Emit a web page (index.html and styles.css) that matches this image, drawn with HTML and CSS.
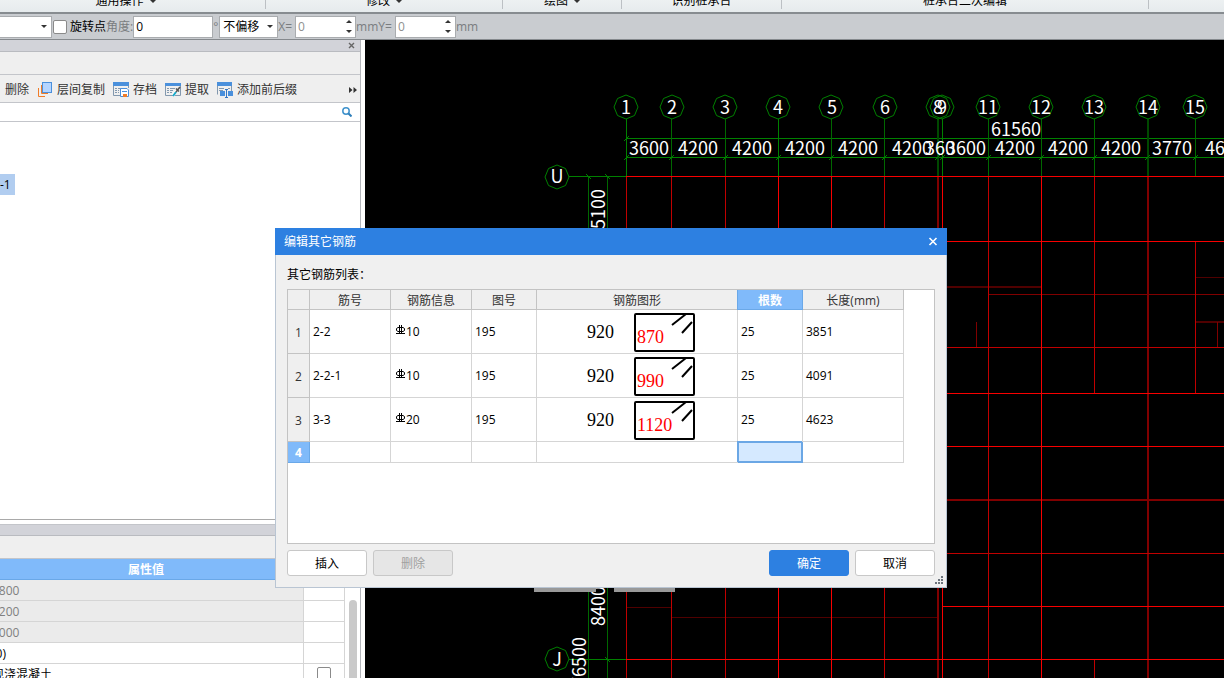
FILE: index.html
```html
<!DOCTYPE html>
<html lang="zh-CN">
    <head>
        <meta charset="utf-8">
        <link rel="stylesheet" href="styles.css">
        <title>编辑其它钢筋</title>
    </head>
    <body>
        <div class="ribbon">
            <div class="group first">通用操作<i class="down"></i></div>
            <div class="group modify">修改<i class="down"></i></div>
            <div class="group draw">绘图<i class="down"></i></div>
            <div class="group detect">识别桩承台</div>
            <div class="group edit">桩承台二次编辑</div>
        </div>

        <div class="options">
            <span class="combo layer"><select aria-label="图层"><option></option></select><i class="down"></i></span>
            <input type="checkbox" id="rotate" class="check">
            <label for="rotate">旋转点</label>
            <label for="angle" class="dim">角度:</label>
            <input type="text" id="angle" class="angle" value="0">
            <span class="dim">°</span>
            <span class="combo offset"><select aria-label="偏移"><option>不偏移</option></select><i class="down"></i></span>
            <label for="offx" class="dim">X=</label>
            <span class="spin"><input type="text" id="offx" value="0"><span class="arrows"><button aria-label="X加"><i class="up"></i></button><button aria-label="X减"><i class="down"></i></button></span></span>
            <label for="offy" class="dim">mmY=</label>
            <span class="spin"><input type="text" id="offy" value="0"><span class="arrows"><button aria-label="Y加"><i class="up"></i></button><button aria-label="Y减"><i class="down"></i></button></span></span>
            <span class="dim">mm</span>
        </div>

        <div class="main">
            <div class="side">
                <div class="caption">
                    <button aria-label="关闭面板"><svg width="7" height="7" viewBox="0 0 7 7"><path d="M1 1L6 6M6 1L1 6" stroke="#666" stroke-width="1.4"/></svg></button>
                </div>
                <div class="tabs"></div>
                <div class="tools">
                    <button>删除</button>
                    <button>
                        <svg width="16" height="16" viewBox="0 0 16 16" fill="none">
                            <path d="M1.500 6V14.500H8M4.500 3V11.500H11" stroke="#f07c28"/>
                            <rect x="5.500" y=".5" width="9" height="10" fill="#b5d5ff" stroke="#4a90dc"/>
                        </svg>
                        层间复制
                    </button>
                    <button>
                        <svg width="16" height="16" viewBox="0 0 16 16" fill="none">
                            <path d="M.5 1V13.500H7M15.500 1V6" stroke="#8298ae"/>
                            <rect width="16" height="4" fill="#4a90dc"/>
                            <path d="M2 6.500H4M5 6.500H9M10 6.500H13M2 8.500H4M5 8.500H6M2 10.500H4M5 10.500H6" stroke="#8298ae"/>
                            <path d="M7.500 6.500H14L15.500 8V14.500H7.500Z" fill="#fff" stroke="#4a90dc"/>
                            <path d="M9 9.500H14" stroke="#4a90dc"/>
                            <rect x="10" y="12" width="4" height="3" fill="#f07c28"/>
                        </svg>
                        存档
                    </button>
                    <button>
                        <svg width="16" height="16" viewBox="0 0 16 16" fill="none">
                            <path d="M.5 2V13.500H15.500V2" stroke="#8298ae"/>
                            <rect y="1" width="16" height="3" fill="#4a90dc"/>
                            <path d="M2 6.500H4M5 6.500H10M2 8.500H4M5 8.500H8M2 10.500H4M5 10.500H7" stroke="#8298ae"/>
                            <path d="M8 13.500L12.500 7.500" stroke="#fff" stroke-width="3"/>
                            <path d="M8 14L11 10" stroke="#18a9c8" stroke-width="2"/>
                            <path d="M11 6.500L14 9.500M11 10L15 5" stroke="#555" stroke-width="1.600"/>
                        </svg>
                        提取
                    </button>
                    <button>
                        <svg width="16" height="16" viewBox="0 0 16 16" fill="none">
                            <path d="M.5 0V12.500M14.500 0V9" stroke="#8298ae"/>
                            <rect width="15" height="4" fill="#4a90dc"/>
                            <path d="M2 6.500H7M2 8.500H6M11 6.500H13" stroke="#8298ae"/>
                            <rect x="3" y="9" width="5" height="5" fill="#4a90dc"/>
                            <rect x="11" y="9" width="5" height="5" fill="#4a90dc"/>
                            <path d="M8 7.500H11M8 15.500H11M9.500 7V16" stroke="#3577c4"/>
                        </svg>
                        添加前后缀
                    </button>
                    <button class="more" aria-label="更多"><svg width="8" height="6" viewBox="0 0 8 6"><path d="M0 0L3.500 3L0 6ZM4.500 0L8 3L4.500 6Z" fill="#333"/></svg></button>
                </div>
                <div class="search">
                    <input type="text" aria-label="搜索">
                    <button aria-label="查找"><svg width="10" height="10" viewBox="0 0 10 10" fill="none"><circle cx="4" cy="4" r="3.200" stroke="#3f92cc" stroke-width="1.500"/><path d="M6.500 6.500L9.500 9.500" stroke="#2f7fba" stroke-width="2"/></svg></button>
                </div>
                <div class="tree">
                    <span class="node">-1</span>
                </div>
                <div class="caption lower"></div>
                <div class="tabs lower"></div>
                <div class="props">
                    <table>
                        <colgroup><col class="value"><col class="extra"></colgroup>
                        <tr><th>属性值</th><th></th></tr>
                        <tr class="locked"><td>1800</td><td></td></tr>
                        <tr class="locked"><td>1200</td><td></td></tr>
                        <tr class="locked"><td>1000</td><td></td></tr>
                        <tr><td>(0)</td><td></td></tr>
                        <tr><td>现浇混凝土</td><td class="tick"><input type="checkbox" class="check" aria-label="附加"></td></tr>
                    </table>
                    <div class="scroll"><div class="thumb"></div></div>
                </div>
            </div>

            <div class="canvas">
                <svg class="drawing" width="100%" height="100%">
                    <defs>
                        <polygon id="axis" points="12,0 8.500,8.500 0,12 -8.500,8.500 -12,0 -8.500,-8.500 0,-12 8.500,-8.500"/>
                    </defs>
                    <g transform="translate(-365 -40)">
                        <!-- dimension lines -->
                        <g class="green">
                            <path d="M626 138.500H2400M626 157.500H2400M569 176.500H626M569 659.500H626"/>
                            <path d="M626.500 119V176M778.500 119V176M942.500 119V176"/>
                            <path class="deep" d="M671.500 119V176M725.500 119V176M831.500 119V176M884.500 119V176M988.500 119V176M1041.500 119V176M1094.500 119V176M1195.500 119V176M588.500 176V2000M607.500 176V2000"/>
                            <path class="wide" d="M938 119V176M1148 119V176"/>
                            <path d="M624 141L629 136M624 160L629 155M669 160L674 155M723 160L728 155M776 160L781 155M829 160L834 155M882 160L887 155M935 160L940 155M940 160L945 155M986 160L991 155M1039 160L1044 155M1092 160L1097 155M1145 160L1150 155M1193 160L1198 155M586 174L591 179M605 174L610 179M605 657L610 662"/>
                            <use href="#axis" x="626" y="107"/>
                            <use href="#axis" x="672" y="107"/>
                            <use href="#axis" x="725" y="107"/>
                            <use href="#axis" x="778" y="107"/>
                            <use href="#axis" x="831" y="107"/>
                            <use href="#axis" x="885" y="107"/>
                            <use href="#axis" x="938" y="107"/>
                            <use href="#axis" x="942" y="107"/>
                            <use href="#axis" x="988" y="107"/>
                            <use href="#axis" x="1041" y="107"/>
                            <use href="#axis" x="1094" y="107"/>
                            <use href="#axis" x="1148" y="107"/>
                            <use href="#axis" x="1195" y="107"/>
                            <use href="#axis" x="557" y="177"/>
                            <use href="#axis" x="557" y="659"/>
                        </g>

                        <!-- grid -->
                        <g class="red">
                            <path class="faint" d="M626 607.500H671M671 617.500H938M1195 277.500H2400"/>
                            <path class="faint wide" d="M942 287H1041M1195 322H2400"/>
                            <path class="dark" d="M988 294.500H2400M976.500 322V347M1217.500 322V347"/>
                            <path class="dark wide" d="M938 176V2000M1148 176V2000M942 500H2400"/>
                            <path class="mid" d="M626.500 176V2000M671.500 176V2000M725.500 176V2000M884.500 176V2000M988.500 176V2000M1094.500 176V393M1094.500 659V2000M1195.500 241V393M942 347.500H2400M942 553.500H2400"/>
                            <path d="M778.500 176V2000M831.500 176V2000M942.500 176V2000M1041.500 176V2000M626 176.500H2400M942 241.500H2400M942 393.500H2400M942 446.500H2400M942 606.500H2400M626 659.500H2400"/>
                        </g>

                        <g class="note">
                            <text x="626" y="114">1</text>
                            <text x="672" y="114">2</text>
                            <text x="725" y="114">3</text>
                            <text x="778" y="114">4</text>
                            <text x="832" y="114">5</text>
                            <text x="885" y="114">6</text>
                            <text x="938" y="114">8</text>
                            <text x="942" y="114">9</text>
                            <text x="988" y="114">11</text>
                            <text x="1041" y="114">12</text>
                            <text x="1094" y="114">13</text>
                            <text x="1148" y="114">14</text>
                            <text x="1195" y="114">15</text>
                            <text x="557" y="183">U</text>
                            <text x="557" y="666">J</text>
                            <text x="1016" y="136">61560</text>
                            <text x="649" y="155">3600</text>
                            <text x="698" y="155">4200</text>
                            <text x="752" y="155">4200</text>
                            <text x="805" y="155">4200</text>
                            <text x="858" y="155">4200</text>
                            <text x="912" y="155">4200</text>
                            <text x="940" y="155">360</text>
                            <text x="966" y="155">3600</text>
                            <text x="1015" y="155">4200</text>
                            <text x="1068" y="155">4200</text>
                            <text x="1121" y="155">4200</text>
                            <text x="1172" y="155">3770</text>
                            <text x="1225" y="155">4600</text>
                            <text transform="translate(605 209) rotate(-90)">5100</text>
                            <text transform="translate(605 606) rotate(-90)">8400</text>
                            <text transform="translate(586 662) rotate(-90)">76500</text>
                        </g>
                        <path d="M534 588H596V592H534ZM614 588H675V592H614Z" fill="#999"/>
                    </g>
                </svg>
            </div>
        </div>

        <div class="dialog" role="dialog" aria-labelledby="dlgtitle">
            <div class="titlebar">
                <span id="dlgtitle">编辑其它钢筋</span>
                <button aria-label="关闭"><svg width="10" height="9" viewBox="0 0 10 9"><path d="M1.500 1L8.500 8M8.500 1L1.500 8" stroke="#fff" stroke-width="1.600"/></svg></button>
            </div>
            <div class="content">
                <div class="heading">其它钢筋列表：</div>
                <div class="list">
                    <table class="bars">
                        <colgroup><col class="c0"><col class="c1"><col class="c1"><col class="c3"><col class="c4"><col class="c3"><col class="c6"></colgroup>
                        <tr class="head"><th></th><th>筋号</th><th>钢筋信息</th><th>图号</th><th>钢筋图形</th><th class="on">根数</th><th>长度(mm)</th></tr>
                        <tr>
                            <th>1</th><td>2-2</td>
                            <td><svg class="rebar" width="9" height="10" viewBox="0 0 9 10"><path d="M3.500 0V9M5.500 0V9M0 8.500H9M2 2.500H7L8.500 3.500V5.500L7 6.500H2L.5 5.500V3.500Z"/></svg>10</td>
                            <td>195</td>
                            <td class="shape"><svg width="200" height="43"><text x="50" y="28">920</text><text class="hot" x="100" y="33">870</text><rect x="98" y="4" width="59" height="37" rx="1"/><path d="M135 15L149 4M145 23L155 12"/></svg></td>
                            <td>25</td><td>3851</td>
                        </tr>
                        <tr>
                            <th>2</th><td>2-2-1</td>
                            <td><svg class="rebar" width="9" height="10" viewBox="0 0 9 10"><path d="M3.500 0V9M5.500 0V9M0 8.500H9M2 2.500H7L8.500 3.500V5.500L7 6.500H2L.5 5.500V3.500Z"/></svg>10</td>
                            <td>195</td>
                            <td class="shape"><svg width="200" height="43"><text x="50" y="28">920</text><text class="hot" x="100" y="33">990</text><rect x="98" y="4" width="59" height="37" rx="1"/><path d="M135 15L149 4M145 23L155 12"/></svg></td>
                            <td>25</td><td>4091</td>
                        </tr>
                        <tr>
                            <th>3</th><td>3-3</td>
                            <td><svg class="rebar" width="9" height="10" viewBox="0 0 9 10"><path d="M3.500 0V9M5.500 0V9M0 8.500H9M2 2.500H7L8.500 3.500V5.500L7 6.500H2L.5 5.500V3.500Z"/></svg>20</td>
                            <td>195</td>
                            <td class="shape"><svg width="200" height="43"><text x="50" y="28">920</text><text class="hot" x="100" y="33">1120</text><rect x="98" y="4" width="59" height="37" rx="1"/><path d="M135 15L149 4M145 23L155 12"/></svg></td>
                            <td>25</td><td>4623</td>
                        </tr>
                        <tr class="blank"><th class="on">4</th><td></td><td></td><td></td><td></td><td class="cursor"></td><td></td></tr>
                    </table>
                </div>
                <div class="buttons">
                    <button>插入</button>
                    <button disabled>删除</button>
                    <button class="ok">确定</button>
                    <button>取消</button>
                </div>
            </div>
            <svg class="grip" width="8" height="8" viewBox="0 0 8 8"><path d="M6 0h2v2h-2zM3 3h2v2h-2zM6 3h2v2h-2zM0 6h2v2h-2zM3 6h2v2h-2zM6 6h2v2h-2z" fill="#6d747c"/></svg>
        </div>
    </body>
</html>
```

FILE: styles.css
```css
* {
    box-sizing: border-box;
}
body {
    margin: 0;
    height: 100vh;
    display: flex;
    flex-direction: column;
    overflow: hidden;
    position: relative;
    background-color: #fff;
    color: #000;
    font-family: "Open Sans", "Noto Sans CJK SC", sans-serif;
    font-size: 12px;
    line-height: 16px;
}
button, input, select {
    font-family: inherit;
    font-size: 12px;
    line-height: 16px;
    margin: 0;
    padding: 0;
}
button {
    border: 0;
    background: none;
    color: inherit;
}
svg {
    display: block;
}

/* small triangles */
.down, .up {
    border: 3px solid transparent;
    width: 0;
    height: 0;
}
.down {
    border-top-color: #333;
    border-bottom-width: 0;
}
.up {
    border-bottom-color: #333;
    border-top-width: 0;
}

/* ribbon */
.ribbon {
    flex: none;
    display: flex;
    height: 14px;
    overflow: hidden;
    background: linear-gradient(#edf1f2, #e6ebed);
    border-bottom: 2px solid #878c90;
}
.group {
    display: flex;
    align-items: flex-end;
    justify-content: center;
    gap: 6px;
    height: 9px;
    border-right: 1px solid #bcc0c4;
    white-space: nowrap;
}
.group .down {
    margin-bottom: 6px;
}
.first {
    width: 266px;
    padding-right: 14px;
}
.modify {
    width: 237px;
}
.draw {
    width: 119px;
}
.detect {
    width: 160px;
}
.edit {
    width: 367px;
}

/* option bar */
.options {
    flex: none;
    display: flex;
    align-items: center;
    height: 26px;
    background-color: #c9ccd0;
    border-bottom: 1px solid #85898d;
    white-space: nowrap;
}
.options label, .options > span {
    flex: none;
}
.dim {
    color: #7a7d80;
}
.combo {
    display: grid;
    align-items: center;
    justify-items: end;
}
.combo select, .combo .down {
    grid-area: 1 / 1;
}
.combo .down {
    margin-right: 5px;
    pointer-events: none;
}
.combo select {
    appearance: none;
    width: 100%;
    height: 22px;
    padding-left: 3px;
    background-color: #fff;
    border: 1px solid #a9acaf;
    border-radius: 0;
    color: #000;
}
.layer {
    width: 52px;
}
.layer select {
    border-left: 0;
}
.offset {
    width: 59px;
    margin-left: 1px;
}
.check {
    appearance: none;
    width: 14px;
    height: 14px;
    background-color: #fff;
    border: 1px solid #8a8a8a;
    border-radius: 2px;
}
.options .check {
    margin: 0 3px 0 1px;
}
.angle, .spin {
    height: 22px;
    background-color: #fff;
    border: 1px solid #a9acaf;
}
.angle {
    width: 80px;
    padding-left: 2px;
}
.spin {
    display: flex;
    width: 61px;
    margin-left: 3px;
}
.spin input {
    flex: 1;
    min-width: 0;
    padding-left: 2px;
    border: 0;
    color: #909090;
}
.arrows {
    display: flex;
    flex-direction: column;
    width: 13px;
}
.arrows button {
    flex: 1;
    display: flex;
    align-items: center;
    justify-content: center;
}

/* left side */
.main {
    flex: 1;
    display: flex;
    min-height: 0;
    overflow: hidden;
}
.side {
    flex: none;
    display: flex;
    flex-direction: column;
    width: 361px;
    margin-right: 4px;
    border-right: 1px solid #b4b6bb;
    overflow: hidden;
}
.caption {
    flex: none;
    display: flex;
    align-items: center;
    justify-content: flex-end;
    height: 12px;
    padding-right: 5px;
    background-color: #d2d3d9;
    border-bottom: 1px solid #b9bbc0;
}
.tabs {
    flex: none;
    height: 23px;
    background-color: #efefef;
    border-bottom: 1px solid #c3c5ca;
}
.tools {
    flex: none;
    display: flex;
    align-items: center;
    gap: 8px;
    height: 28px;
    padding: 2px 3px 0 5px;
    background-color: #efefef;
    border-bottom: 1px solid #c3c5ca;
    color: #333;
    white-space: nowrap;
}
.tools button {
    display: flex;
    align-items: center;
    gap: 4px;
}
.tools .more {
    margin-left: auto;
}
.search {
    flex: none;
    display: flex;
    align-items: center;
    height: 19px;
    padding-right: 8px;
    border-bottom: 1px solid #c3c5ca;
}
.search input {
    flex: 1;
    height: 18px;
    border: 0;
}
.tree {
    flex: none;
    height: 398px;
    padding-top: 52px;
    border-bottom: 1px solid #a9a9a9;
}
.node {
    display: inline-block;
    padding: 3px 4px 2px 0;
    background-color: #b1cdf0;
}
.caption.lower {
    margin-top: 4px;
    border-top: 1px solid #c3c5ca;
}
.props {
    flex: 1;
    display: flex;
    gap: 4px;
    min-height: 0;
}
.props table {
    flex: none;
    table-layout: fixed;
    border-spacing: 0;
    width: 357px;
    height: min-content;
    margin-left: -12px;
}
.value {
    width: 316px;
}
.extra {
    width: 41px;
}
.props th {
    height: 21px;
    padding: 2px 0 0;
    background-color: #80bafa;
    border-bottom: 1px solid #6aa8e8;
    color: #fff;
}
.props td {
    height: 21px;
    padding: 2px 4px 0;
    border: solid #d5d5d5;
    border-width: 0 1px 1px 0;
}
.locked td:first-child {
    background-color: #ebebeb;
    color: #808080;
}
.props .tick {
    padding: 0 13px;
}
.tick .check {
    display: block;
}
.scroll {
    width: 8px;
    padding-top: 41px;
}
.thumb {
    height: 100%;
    background-color: #c9c9c9;
    border-radius: 4px 4px 0 0;
}

/* drawing area */
.canvas {
    flex: 1;
    min-width: 0;
    background-color: #000;
    overflow: hidden;
}
.green {
    fill: none;
    stroke: #008000;
}
.green .deep {
    stroke: #006800;
}
.green .wide {
    stroke: #004800;
}
.red {
    fill: none;
    stroke: #f80000;
}
.red .mid {
    stroke: #c00000;
}
.red .dark {
    stroke: #800000;
}
.red .faint {
    stroke: #500000;
}
.drawing .wide {
    stroke-width: 2px;
}
.note {
    fill: #fff;
    font-family: "Noto Sans CJK SC", sans-serif;
    font-size: 18px;
    text-anchor: middle;
}

/* dialog */
.dialog {
    position: absolute;
    left: 275px;
    top: 228px;
    width: 672px;
    background-color: #f0f0f0;
}
.titlebar {
    display: flex;
    align-items: center;
    justify-content: space-between;
    height: 27px;
    padding: 0 9px;
    background-color: #2d80e1;
    color: #fff;
}
.content {
    padding: 12px 11px 11px;
    border: solid #b9c5d3;
    border-width: 0 1px 1px;
}
.heading {
    margin-bottom: 6px;
}
.list {
    height: 255px;
    background-color: #fff;
    border: 1px solid #c3c3c3;
}
.bars {
    table-layout: fixed;
    border-spacing: 0;
    width: 616px;
}
.c0 {
    width: 22px;
}
.c1 {
    width: 81px;
}
.c3 {
    width: 65px;
}
.c4 {
    width: 201px;
}
.c6 {
    width: 101px;
}
.bars th, .bars td {
    border: solid #d5d5d5;
    border-width: 0 1px 1px 0;
}
.bars th {
    padding: 2px 0 0;
    background-color: #efefef;
    border-color: #c3c3c3;
    color: #333;
    font-weight: normal;
}
.bars td {
    height: 44px;
    padding: 0 3px;
}
.bars .head th {
    height: 20px;
}
.bars .blank td {
    height: 21px;
}
.bars th.on {
    background-color: #80bafa;
    border-color: #6aa8e8;
    color: #fff;
    font-weight: bold;
}
.bars .head .on {
    box-shadow: -1px 0 #6aa8e8;
}
.bars .cursor {
    background-color: #d5e9ff;
    border: 0;
    box-shadow: -1px -1px #6ba7e5, inset 1px 1px #6ba7e5, inset -2px -2px #6ba7e5;
}
.rebar {
    display: inline-block;
    margin: 0 1px 0 2px;
    vertical-align: 1px;
    fill: none;
    stroke: #000;
}
.bars .shape {
    padding: 0;
}
.shape text {
    font-family: "Liberation Serif", "Noto Sans CJK SC", serif;
    font-size: 18px;
}
.shape .hot {
    fill: #f00;
}
.shape rect, .shape path {
    fill: none;
    stroke: #000;
    stroke-width: 2px;
}
.buttons {
    display: flex;
    gap: 6px;
    margin-top: 6px;
}
.buttons button {
    width: 80px;
    height: 26px;
    padding-top: 2px;
    background-color: #fff;
    border: 1px solid #c8c8c8;
    border-radius: 3px;
}
.buttons button:disabled {
    background-color: #e6e6e6;
    color: #a0a0a0;
}
.buttons .ok {
    margin-left: auto;
    background-color: #2d80e1;
    border-color: #2d80e1;
    color: #fff;
}
.grip {
    position: absolute;
    right: 4px;
    bottom: 4px;
}
```
